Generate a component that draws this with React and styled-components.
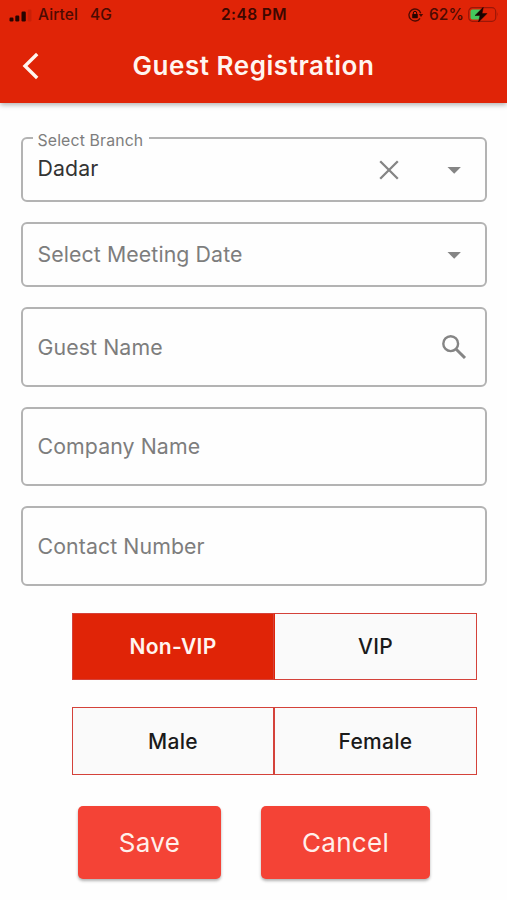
import { useState } from 'react'
import styled, { createGlobalStyle } from 'styled-components'

const colors = {
    primary: '#e02407',
    accent: '#f44336',
    outline: '#b3b3b3',
    hint: '#7d7d7d',
    text: '#333333',
    status: '#4d0a02',
}

const GlobalStyle = createGlobalStyle`
    * {
        box-sizing: border-box;
    }
    body {
        margin: 0;
        background-color: #fefefe;
        font-family: Inter, 'Liberation Sans', sans-serif;
    }
    button {
        font-family: inherit;
        padding: 0;
    }
`

const Screen = styled.div`
    display: flex;
    flex-direction: column;
    height: 900px;
    overflow: hidden;
`

const Header = styled.header`
    height: 103px;
    background-color: ${colors.primary};
    box-shadow: 0 2px 5px rgba(0, 0, 0, 0.3);
`

const StatusBar = styled.div`
    display: grid;
    grid-template-columns: 1fr auto 1fr;
    align-items: center;
    height: 30px;
    padding: 0 8px 0 9px;
    color: ${colors.status};
    font-size: 15.5px;
    font-weight: 500;
    line-height: 30px;
`

const Carrier = styled.div`
    display: flex;
    align-items: center;
    gap: 6px;
    letter-spacing: 0.1px;
`

const Network = styled.span`
    margin-left: 6px;
`

const Clock = styled.div`
    color: #3d0700;
    font-weight: 600;
    letter-spacing: 0.4px;
`

const Battery = styled.div`
    display: flex;
    align-items: center;
    justify-content: flex-end;
    gap: 4px;
    letter-spacing: 0.1px;
`

const TitleBar = styled.div`
    display: grid;
    grid-template-columns: 60px 1fr 60px;
    align-items: center;
    height: 71px;
`

const BackButton = styled.button`
    display: flex;
    padding-left: 22px;
    border: 0;
    background: none;
`

const Title = styled.h1`
    margin: 0;
    color: #fff5f0;
    font-size: 26px;
    font-weight: 600;
    letter-spacing: 0.55px;
    text-align: center;
    white-space: nowrap;
`

const Form = styled.main`
    display: flex;
    flex-direction: column;
    gap: 20px;
    padding: 34px 20px 0 21px;
`

const Field = styled.div`
    position: relative;
    display: flex;
    align-items: center;
    height: ${(props) => props.$height}px;
    padding: 0 18px 0 14.5px;
    border: 2px solid ${colors.outline};
    border-radius: 6px;
    color: ${(props) => (props.$filled ? colors.text : colors.hint)};
    font-size: 21.3px;
    letter-spacing: 0.1px;
`

const FieldLabel = styled.span`
    position: absolute;
    top: -8px;
    left: 9.5px;
    padding: 0 6px 0 5px;
    background-color: #fefefe;
    color: ${colors.hint};
    font-size: 15.8px;
    line-height: 20px;
    letter-spacing: 0.15px;
`

const FieldText = styled.span`
    flex: 1;
    padding-bottom: ${(props) => (props.$raised ? 3 : 0.5)}px;
    white-space: nowrap;
`

const FieldIcon = styled.svg`
    flex: none;
`

const ArrowSlot = styled.span`
    display: flex;
    margin-left: 42px;
`

const Choices = styled.div`
    display: flex;
    flex-direction: column;
    gap: 27px;
    padding: 6.7px 10px 0 51px;
`

const ToggleGroup = styled.div`
    display: grid;
    grid-template-columns: 202px 203px;
    height: 67.5px;
`

const ToggleButton = styled.button`
    border: 1px solid #d4423a;
    border-left-color: ${(props) => (props.$joined ? colors.primary : '#d4423a')};
    background-color: ${(props) => (props.$active ? colors.primary : '#fafafa')};
    color: ${(props) => (props.$active ? '#fff5f0' : '#1a1a1a')};
    font-size: 21px;
    font-weight: ${(props) => (props.$active ? 600 : 500)};
    letter-spacing: 0.3px;
`

const Actions = styled.div`
    display: flex;
    gap: 40px;
    padding: 11px 0 0 57px;
`

const ActionButton = styled.button`
    width: ${(props) => props.$width}px;
    height: 73px;
    border: 0;
    border-radius: 5px;
    background-color: ${colors.accent};
    box-shadow: 0 2px 3px rgba(0, 0, 0, 0.3);
    color: #fff0eb;
    font-size: 26px;
    letter-spacing: 0.3px;
`

function SignalIcon() {
    return (
        <svg width="23" height="14" viewBox="0 0 23 14">
            <g fill="#260400">
                <rect x="0.5" y="9.5" width="4" height="4" rx="1.2" />
                <rect x="6.3" y="7.5" width="4" height="6" rx="1.2" />
                <rect x="12.5" y="3.5" width="4.3" height="10" rx="1.2" />
            </g>
            <rect x="18.8" y="1.5" width="3.6" height="12" rx="1.2" fill="#c91f07" />
        </svg>
    )
}

function RotationLockIcon() {
    return (
        <svg width="17" height="14" viewBox="0 0 17 14" fill="none">
            <path
                d="M12.7 5.2A6 6 0 1 0 12 10.3"
                stroke={colors.status}
                strokeWidth="1.3"
            />
            <path d="M10.8 6h4.4l-2.2 3z" fill={colors.status} />
            <rect x="4.2" y="6" width="5.6" height="4.2" rx="0.6" fill="#260400" />
            <path d="M5.3 6.5V5a1.7 1.7 0 0 1 3.4 0v1.5" stroke="#260400" />
        </svg>
    )
}

function BatteryIcon() {
    return (
        <svg width="31" height="16" viewBox="0 0 31 16">
            <rect
                x="0.7"
                y="0.7"
                width="27"
                height="13.6"
                rx="3.8"
                fill="none"
                stroke="#9b1708"
                strokeWidth="1.2"
            />
            <path d="M29.3 5.3q1.5 2.2 0 4.4z" fill="#9b1708" />
            <path d="M4.5 2.5H13v10H4.5q-2 0-2-2v-6q0-2 2-2z" fill="#43c85d" />
            <path
                d="M15.3 0.3L7 8.5h5l-1.5 6.5L19 6.5h-5z"
                fill="#180300"
                stroke="#180300"
                strokeWidth="0.5"
            />
        </svg>
    )
}

function ArrowIcon() {
    return (
        <ArrowSlot>
            <FieldIcon width="26" height="26" viewBox="0 0 26 26">
                <path d="M6.5 10h13.4l-6.7 6.8z" fill="#858585" />
            </FieldIcon>
        </ArrowSlot>
    )
}

function App() {
    const [guestType, setGuestType] = useState('Non-VIP')
    const [gender, setGender] = useState(null)

    return (
        <Screen>
            <GlobalStyle />
            <Header>
                <StatusBar>
                    <Carrier>
                        <SignalIcon />
                        <span>Airtel</span>
                        <Network>4G</Network>
                    </Carrier>
                    <Clock>2:48 PM</Clock>
                    <Battery>
                        <RotationLockIcon />
                        <span>62%</span>
                        <BatteryIcon />
                    </Battery>
                </StatusBar>
                <TitleBar>
                    <BackButton aria-label="Back">
                        <svg width="18" height="28" viewBox="0 0 18 28">
                            <path
                                d="M15.2 2L3 14l12.2 12"
                                fill="none"
                                stroke="#fff5f0"
                                strokeWidth="3.4"
                            />
                        </svg>
                    </BackButton>
                    <Title>Guest Registration</Title>
                </TitleBar>
            </Header>
            <Form>
                <Field $height={65} $filled>
                    <FieldLabel>Select Branch</FieldLabel>
                    <FieldText $raised>Dadar</FieldText>
                    <FieldIcon width="20" height="20" viewBox="0 0 20 20">
                        <path
                            d="M1.2 1.2l17.6 17.6M18.8 1.2L1.2 18.8"
                            stroke="#858585"
                            strokeWidth="2.3"
                        />
                    </FieldIcon>
                    <ArrowIcon />
                </Field>
                <Field $height={65}>
                    <FieldText>Select Meeting Date</FieldText>
                    <ArrowIcon />
                </Field>
                <Field $height={79.7}>
                    <FieldText>Guest Name</FieldText>
                    <FieldIcon width="25" height="24" viewBox="0 0 25 24">
                        <circle
                            cx="8.7"
                            cy="8.7"
                            r="7.4"
                            fill="none"
                            stroke="#858585"
                            strokeWidth="2.4"
                        />
                        <path d="M14.2 14.2L23 23" stroke="#858585" strokeWidth="3" />
                    </FieldIcon>
                </Field>
                <Field $height={79.7}>
                    <FieldText>Company Name</FieldText>
                </Field>
                <Field $height={79.7}>
                    <FieldText>Contact Number</FieldText>
                </Field>
                <Choices>
                    <ToggleGroup>
                        {['Non-VIP', 'VIP'].map((type) => (
                            <ToggleButton
                                key={type}
                                $active={guestType === type}
                                $joined={type === 'VIP'}
                                onClick={() => setGuestType(type)}
                            >
                                {type}
                            </ToggleButton>
                        ))}
                    </ToggleGroup>
                    <ToggleGroup>
                        {['Male', 'Female'].map((type) => (
                            <ToggleButton
                                key={type}
                                $active={gender === type}
                                onClick={() => setGender(type)}
                            >
                                {type}
                            </ToggleButton>
                        ))}
                    </ToggleGroup>
                </Choices>
                <Actions>
                    <ActionButton $width={143}>Save</ActionButton>
                    <ActionButton $width={169}>Cancel</ActionButton>
                </Actions>
            </Form>
        </Screen>
    )
}

export default App
